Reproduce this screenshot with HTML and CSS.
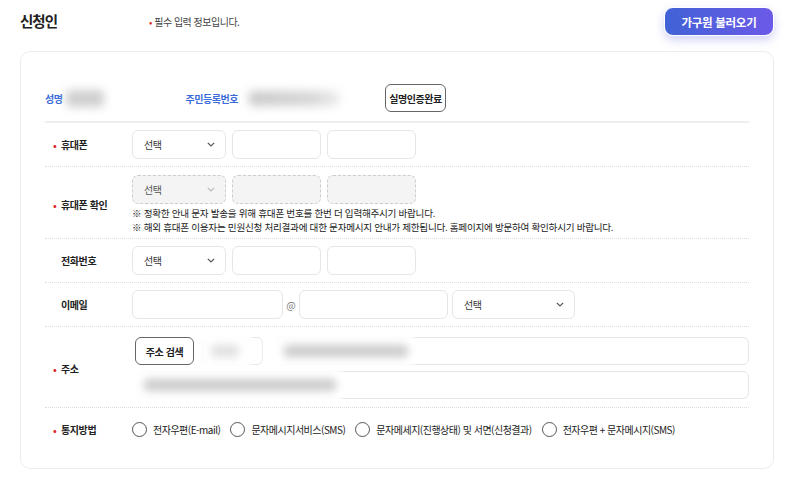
FILE: index.html
```html
<!DOCTYPE html>
<html lang="ko">
<head>
<meta charset="utf-8">
<title>신청인</title>
<link rel="stylesheet" href="styles.css">
</head>
<body>
<div class="page">
  <div class="head">
    <h2 class="title">신청인</h2>
    <p class="req-note"><span class="dot">•</span> 필수 입력 정보입니다.</p>
    <button class="load-btn" type="button">가구원 불러오기</button>
  </div>

  <div class="card">
    <div class="id-row">
      <span class="id-label">성명</span>
      <span class="smear smear-name"></span>
      <span class="id-label id-jumin">주민등록번호</span>
      <span class="smear smear-jumin"></span>
      <button class="outline-btn verify" type="button">실명인증완료</button>
    </div>

    <div class="row">
      <div class="lbl req">휴대폰</div>
      <div class="fields">
        <div class="sel w-sel">선택<svg class="chev" viewBox="0 0 8 5"><path d="M0.8 0.8 L4 4 L7.2 0.8"/></svg></div>
        <div class="inp w-num"></div>
        <div class="inp w-num"></div>
      </div>
    </div>

    <div class="row row-confirm">
      <div class="lbl req">휴대폰 확인</div>
      <div class="stack">
        <div class="fields">
          <div class="sel w-sel disabled">선택<svg class="chev" viewBox="0 0 8 5"><path d="M0.8 0.8 L4 4 L7.2 0.8"/></svg></div>
          <div class="inp w-num disabled"></div>
          <div class="inp w-num disabled"></div>
        </div>
        <p class="notes">※ 정확한 안내 문자 발송을 위해 휴대폰 번호를 한번 더 입력해주시기 바랍니다.<br>※ 해외 휴대폰 이용자는 민원신청 처리결과에 대한 문자메시지 안내가 제한됩니다. 홈페이지에 방문하여 확인하시기 바랍니다.</p>
      </div>
    </div>

    <div class="row">
      <div class="lbl">전화번호</div>
      <div class="fields">
        <div class="sel w-sel">선택<svg class="chev" viewBox="0 0 8 5"><path d="M0.8 0.8 L4 4 L7.2 0.8"/></svg></div>
        <div class="inp w-num"></div>
        <div class="inp w-num"></div>
      </div>
    </div>

    <div class="row">
      <div class="lbl">이메일</div>
      <div class="fields email">
        <div class="inp w-mail1"></div>
        <span class="at">@</span>
        <div class="inp w-mail2"></div>
        <div class="sel w-mailsel">선택<svg class="chev" viewBox="0 0 8 5"><path d="M0.8 0.8 L4 4 L7.2 0.8"/></svg></div>
      </div>
    </div>

    <div class="row row-addr">
      <div class="lbl req">주소</div>
      <div class="stack addr-stack">
        <div class="fields addr-line">
          <button class="outline-btn addr-btn" type="button">주소 검색</button>
          <div class="inp w-zip"><span class="mask mask-zip"></span><span class="smear smear-zip"></span></div>
          <div class="inp grow"><span class="mask mask-a1"></span><span class="smear smear-a1"></span></div>
        </div>
        <div class="fields addr-line">
          <div class="inp grow line2"><span class="mask mask-a2"></span><span class="smear smear-a2"></span></div>
        </div>
      </div>
    </div>

    <div class="row row-last">
      <div class="lbl req">통지방법</div>
      <div class="radios">
        <label class="radio"><span class="circle"></span>전자우편(E-mail)</label>
        <label class="radio"><span class="circle"></span>문자메시지서비스(SMS)</label>
        <label class="radio"><span class="circle"></span>문자메세지(진행상태) 및 서면(신청결과)</label>
        <label class="radio"><span class="circle"></span>전자우편 + 문자메시지(SMS)</label>
      </div>
    </div>
  </div>
</div>
</body>
</html>
```

FILE: styles.css
```css
* { box-sizing: border-box; }
html, body { margin: 0; padding: 0; background: #ffffff; }
body {
  font-family: "Noto Sans CJK KR", "Noto Sans", sans-serif;
  color: #222;
  font-size: 10px;
  letter-spacing: -0.4px;
}
.page { width: 800px; padding: 7px 26px 0 20px; }

.head { display: flex; align-items: center; height: 29px; margin-bottom: 15px; }
.title { margin: 0; width: 129px; font-size: 14.5px; font-weight: 700; letter-spacing: -1px; color: #222; line-height: 1; }
.req-note { margin: 0; font-size: 10px; color: #444; letter-spacing: -0.5px; }
.dot { color: #e02a2a; }
.load-btn {
  margin-left: auto;
  width: 110px; height: 29px;
  border: 1px solid #ffffff;
  border-radius: 9px;
  background: linear-gradient(90deg, #4162d6 0%, #6c5ae8 100%);
  color: #fff;
  font-family: inherit;
  font-size: 11.5px; font-weight: 700; letter-spacing: -0.3px;
  box-shadow: 0 4px 10px rgba(85, 90, 220, 0.28);
  padding: 0;
}

.card {
  border: 1px solid #ececec;
  border-radius: 10px;
  padding: 32px 24px 16px 24px;
  height: 418px;
}

.id-row { display: flex; align-items: center; height: 28px; margin-bottom: 9px; }
.id-label { color: #3a6bd9; font-weight: 700; font-size: 10px; letter-spacing: -0.45px; }
.id-jumin { margin-left: 82px; }
.smear { display: inline-block; background: #cfcfcf; filter: blur(5px); border-radius: 4px; }
.smear-name { width: 38px; height: 17px; margin-left: 3px; }
.smear-jumin { width: 90px; height: 15px; margin-left: 11px; background: linear-gradient(90deg, #cacaca, #d6d6d6 70%, #ececec); }
.outline-btn {
  background: #fff;
  border: 1px solid #666;
  border-radius: 6px;
  font-family: inherit;
  font-weight: 700;
  font-size: 10px;
  letter-spacing: -0.45px;
  color: #222;
  padding: 0;
  height: 28px;
}
.verify { width: 61px; margin-left: 46px; }

.id-row + .row { border-top: 2px solid #eeeeee; }

.row {
  display: grid;
  grid-template-columns: 87px 1fr;
  align-items: center;
  padding: 7px 0;
  border-bottom: 1px dotted #dcdcdc;
}
.row-confirm { padding: 8px 0 4px; }
.row-addr { padding: 10px 0 8px; }
.row-last { border-bottom: 0; padding: 14px 0; }

.lbl { padding-left: 16px; font-weight: 700; font-size: 10px; letter-spacing: -0.4px; color: #222; }
.lbl.req::before { content: "•"; color: #e02a2a; display: inline-block; width: 8px; margin-left: -8px; letter-spacing: 0; }

.fields { display: flex; align-items: center; gap: 6px; }
.stack { display: flex; flex-direction: column; }
.inp, .sel {
  position: relative;
  height: 29px;
  border: 1px solid #e6e6e6;
  border-radius: 6px;
  background: #fff;
}
.sel { display: flex; align-items: center; justify-content: space-between; padding: 0 10px 0 11px; color: #333; font-size: 10px; }
.chev { width: 8px; height: 5px; fill: none; stroke: #555; stroke-width: 1.2; }
.disabled { background: #f4f4f4; border: 1px dashed #cccccc; color: #555; }
.disabled .chev { stroke: #b8b8b8; }
.w-sel { width: 94px; }
.w-num { width: 89px; }

.notes { margin: 2px 0 0; font-size: 9.6px; line-height: 14px; letter-spacing: -0.28px; color: #222; }

.email { gap: 3px; }
.w-mail1 { width: 151px; }
.at { color: #777; font-size: 10px; width: 10px; text-align: center; letter-spacing: 0; }
.w-mail2 { width: 149px; }
.w-mailsel { width: 123px; margin-left: 1px; }

.addr-stack { gap: 6px; }
.addr-line { gap: 8px; }
.addr-line .inp { height: 28px; }
.addr-btn { width: 59px; margin-left: 3px; }
.w-zip { width: 61px; }
.grow { flex: 1; }
.line2 { margin-left: 1px; }
.mask { position: absolute; background: #fff; filter: blur(2px); top: -3px; bottom: -3px; }
.mask-zip { left: -2px; right: 10px; top: -4px; }
.mask-a1 { left: -8px; width: 150px; }
.mask-a2 { left: -4px; width: 212px; }
.inp .smear { position: absolute; height: 12px; top: 7px; filter: blur(4px); }
.smear-zip { left: 8px; width: 28px; background: #e0e0e0; }
.smear-a1 { left: 12px; width: 124px; background: #cbcbcb; }
.smear-a2 { left: 10px; width: 192px; background: #cbcbcb; }

.radios { display: flex; align-items: center; gap: 10px; }
.radio { display: flex; align-items: center; gap: 6px; font-size: 10px; letter-spacing: -0.5px; color: #222; }
.circle { width: 15px; height: 15px; border: 1px solid #555; border-radius: 50%; background: #fff; flex: none; }
```
